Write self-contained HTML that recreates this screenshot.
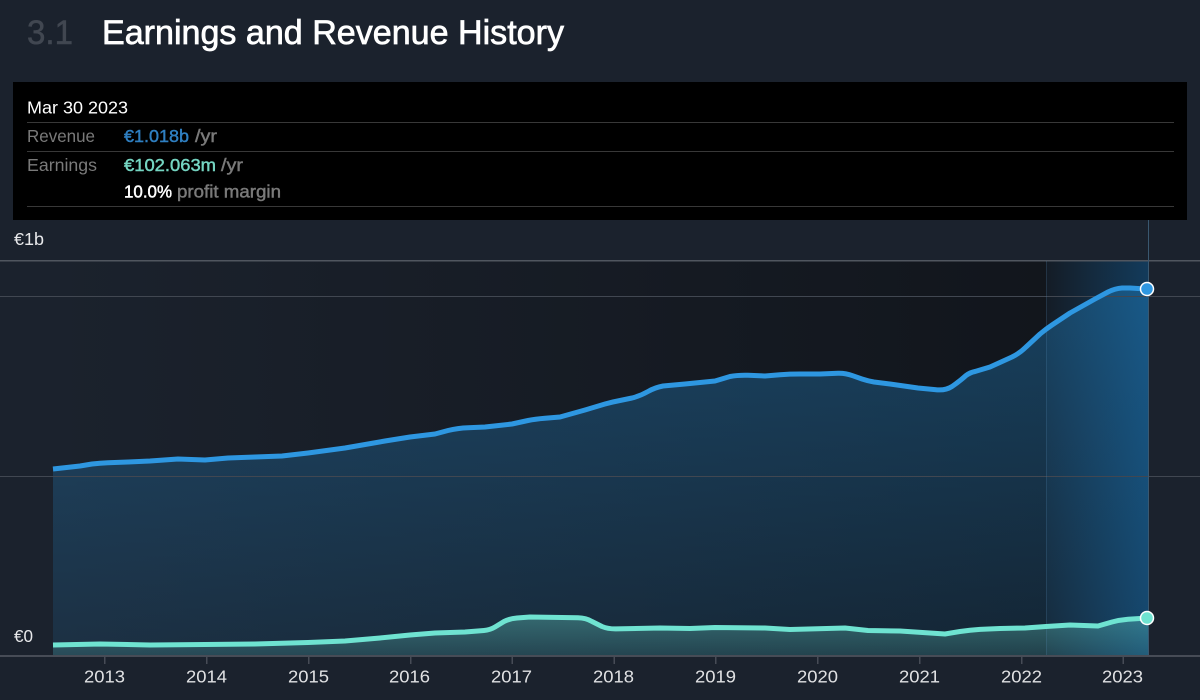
<!DOCTYPE html>
<html>
<head>
<meta charset="utf-8">
<style>
html,body{margin:0;padding:0;background:#1b222d;width:1200px;height:700px;overflow:hidden}
svg{display:block}
text{font-family:"Liberation Sans",sans-serif}
</style>
</head>
<body>
<svg width="1200" height="700" viewBox="0 0 1200 700" xmlns="http://www.w3.org/2000/svg">
<defs>
<linearGradient id="dark" x1="53" x2="1046" y1="0" y2="0" gradientUnits="userSpaceOnUse">
<stop offset="0" stop-color="#0c0e12" stop-opacity="0"/>
<stop offset="1" stop-color="#0c0e12" stop-opacity=".62"/>
</linearGradient>
<linearGradient id="hl" x1="1046" x2="1148" y1="0" y2="0" gradientUnits="userSpaceOnUse">
<stop offset="0" stop-color="#141c26"/>
<stop offset="1" stop-color="#133b5b"/>
</linearGradient>
<linearGradient id="blue" x1="0" x2="0" y1="290" y2="656" gradientUnits="userSpaceOnUse">
<stop offset="0" stop-color="#2394df" stop-opacity=".34"/>
<stop offset="1" stop-color="#2394df" stop-opacity=".12"/>
</linearGradient>
<linearGradient id="teal" x1="0" x2="0" y1="617" y2="656" gradientUnits="userSpaceOnUse">
<stop offset="0" stop-color="#71e7d6" stop-opacity=".32"/>
<stop offset="1" stop-color="#71e7d6" stop-opacity=".14"/>
</linearGradient>
</defs>

<rect width="1200" height="700" fill="#1b222d"/>

<!-- background bands -->
<rect x="53" y="261" width="993" height="395" fill="url(#dark)"/>
<rect x="1046" y="261" width="102" height="395" fill="url(#hl)"/>

<!-- areas -->
<path fill="url(#blue)" d="M53 469L80 466L100 463L128 462L150 461L178 459L205 460L228 458L255 457L282 456L308 453L345 448L385 441L410 437L435 434L458 428L485 427L512 424L535 419L560 417L585 410L612 402L640 396L660 386L685 384L715 381L738 375L765 376L790 374L820 374L845 373L868 381L890 384L918 388L945 390L955 384L968 374L990 367L1020 353L1046 329L1070 313L1095 299L1115 289L1128 288L1148 289L1148 656L53 656Z"/>
<path fill="url(#teal)" d="M53 645L100 644L150 645L205 644.5L255 644L308 642.5L345 641L380 638L410 635L435 633L465 632L490 630L500 624L510 619L530 617L585 618L598 624L612 629L660 628L690 628.5L715 627.5L765 628L790 629.5L845 628L868 630.5L900 631L945 634L970 630L1000 628.5L1025 628L1046 626.5L1070 625L1098 626L1120 620L1148 618L1148 656L53 656Z"/>

<!-- grid lines -->
<rect x="0" y="260" width="1200" height="1.5" fill="#50565f"/>
<rect x="0" y="296" width="1200" height="1" fill="#414751"/>
<rect x="0" y="476" width="1200" height="1" fill="#414751"/>
<rect x="1046" y="261" width="1" height="395" fill="#5b8fb5" fill-opacity=".22"/>
<rect x="1148" y="220" width="1" height="436" fill="#3a5870"/>

<!-- axis -->
<rect x="0" y="655" width="1200" height="2" fill="#474c56"/>
<g fill="#474c56">
<rect x="104" y="656" width="1.5" height="8"/>
<rect x="206" y="656" width="1.5" height="8"/>
<rect x="308" y="656" width="1.5" height="8"/>
<rect x="410" y="656" width="1.5" height="8"/>
<rect x="511.500" y="656" width="1.5" height="8"/>
<rect x="613.500" y="656" width="1.5" height="8"/>
<rect x="715" y="656" width="1.5" height="8"/>
<rect x="817" y="656" width="1.5" height="8"/>
<rect x="919" y="656" width="1.5" height="8"/>
<rect x="1021" y="656" width="1.5" height="8"/>
<rect x="1122.500" y="656" width="1.5" height="8"/>
</g>

<!-- lines -->
<path fill="none" stroke="#2e97e1" stroke-width="5" stroke-linejoin="round" d="M53 469L80 466L92 464Q100 463 108 462.700L128 462L150 461L178 459L205 460L228 458L255 457L282 456L308 453L345 448L385 441L410 437L435 434L448 430.500Q458 428 468 427.700L485 427L512 424L528 420.500Q535 419 545 418.200L560 417L585 410L605 404Q612 402 620 400.500L632 398Q640 396 648 391.500Q655 387.500 663 386L685 384L715 381L730 376.500Q738 375 748 375.300L765 376L780 374.700Q790 374 800 374L820 374L838 373.300Q845 373 853 375.800L862 379Q868 381 874 382L890 384L918 388L935 389.600Q945 391 952 386.500Q960 381 966 375.500Q970 372.500 975 371.500L990 367L1012 357Q1020 353 1026 347L1040 334Q1046 329 1052 325L1070 313L1095 299L1108 292Q1115 288.500 1122 288L1130 288L1147 289"/>
<path fill="none" stroke="#6fe3d1" stroke-width="5" stroke-linejoin="round" d="M53 645L100 644L150 645L205 644.500L255 644L308 642.500L345 641L380 638L410 635L435 633L465 632L484 630.500Q490 630 495 627L504 621.500Q510 618.500 517 618L530 617L578 617.800Q586 618 592 621.500L602 626.500Q608 629 616 628.900L660 628L690 628.500L715 627.500L765 628L790 629.500L845 628L868 630.500L900 631L945 634L960 631.500Q970 630 980 629.400L1000 628.500L1025 628L1046 626.500L1070 625L1098 626L1112 622Q1120 620 1128 619.300L1147 618"/>
<circle cx="1147" cy="289" r="6.500" fill="#2e97e1" stroke="#fff" stroke-width="1.500"/>
<circle cx="1147" cy="618" r="6.500" fill="#6fe3d1" stroke="#fff" stroke-width="1.500"/>

<!-- tooltip panel -->
<rect x="13" y="82" width="1174" height="138" fill="#000"/>
<rect x="27" y="122" width="1147" height="1" fill="#383838"/>
<rect x="27" y="151" width="1147" height="1" fill="#383838"/>
<rect x="27" y="206" width="1147" height="1" fill="#383838"/>

<!-- heading -->
<text x="27" y="44" font-size="34" fill="#414751" stroke="#414751" stroke-width=".5" textLength="46" lengthAdjust="spacingAndGlyphs">3.1</text>
<text x="102" y="44" font-size="34" fill="#fff" stroke="#fff" stroke-width=".7" textLength="462" lengthAdjust="spacingAndGlyphs">Earnings and Revenue History</text>

<!-- tooltip text -->
<text x="27" y="113.500" font-size="17.500" fill="#fff" textLength="101" lengthAdjust="spacingAndGlyphs">Mar 30 2023</text>
<text x="27" y="142" font-size="17.500" fill="#7a7a7a" textLength="68" lengthAdjust="spacingAndGlyphs">Revenue</text>
<text x="124" y="142" font-size="17.500" fill="#2f7fc1" stroke="#2f7fc1" stroke-width=".45" textLength="65" lengthAdjust="spacingAndGlyphs">€1.018b</text>
<text x="195" y="142" font-size="17.500" fill="#7a7a7a" stroke="#7a7a7a" stroke-width=".45" textLength="22" lengthAdjust="spacingAndGlyphs">/yr</text>
<text x="27" y="171" font-size="17.500" fill="#7a7a7a" textLength="70" lengthAdjust="spacingAndGlyphs">Earnings</text>
<text x="124" y="171" font-size="17.500" fill="#75d5c2" stroke="#75d5c2" stroke-width=".45" textLength="92" lengthAdjust="spacingAndGlyphs">€102.063m</text>
<text x="221" y="171" font-size="17.500" fill="#7a7a7a" stroke="#7a7a7a" stroke-width=".45" textLength="22" lengthAdjust="spacingAndGlyphs">/yr</text>
<text x="124" y="197.500" font-size="17.500" fill="#fff" stroke="#fff" stroke-width=".45" textLength="48" lengthAdjust="spacingAndGlyphs">10.0%</text>
<text x="177" y="197.500" font-size="17.500" fill="#7a7a7a" stroke="#7a7a7a" stroke-width=".45" textLength="104" lengthAdjust="spacingAndGlyphs">profit margin</text>

<!-- y labels -->
<text x="14" y="245" font-size="17.500" fill="#e8e9eb" textLength="30" lengthAdjust="spacingAndGlyphs">€1b</text>
<text x="14" y="642" font-size="17.500" fill="#e8e9eb" textLength="19" lengthAdjust="spacingAndGlyphs">€0</text>

<!-- x labels -->
<g font-size="17.500" fill="#e0e1e3">
<text x="84" y="682.500" textLength="41" lengthAdjust="spacingAndGlyphs">2013</text>
<text x="186" y="682.500" textLength="41" lengthAdjust="spacingAndGlyphs">2014</text>
<text x="288" y="682.500" textLength="41" lengthAdjust="spacingAndGlyphs">2015</text>
<text x="389" y="682.500" textLength="41" lengthAdjust="spacingAndGlyphs">2016</text>
<text x="491" y="682.500" textLength="41" lengthAdjust="spacingAndGlyphs">2017</text>
<text x="593" y="682.500" textLength="41" lengthAdjust="spacingAndGlyphs">2018</text>
<text x="695" y="682.500" textLength="41" lengthAdjust="spacingAndGlyphs">2019</text>
<text x="797" y="682.500" textLength="41" lengthAdjust="spacingAndGlyphs">2020</text>
<text x="899" y="682.500" textLength="41" lengthAdjust="spacingAndGlyphs">2021</text>
<text x="1001" y="682.500" textLength="41" lengthAdjust="spacingAndGlyphs">2022</text>
<text x="1102" y="682.500" textLength="41" lengthAdjust="spacingAndGlyphs">2023</text>
</g>
</svg>
</body>
</html>
